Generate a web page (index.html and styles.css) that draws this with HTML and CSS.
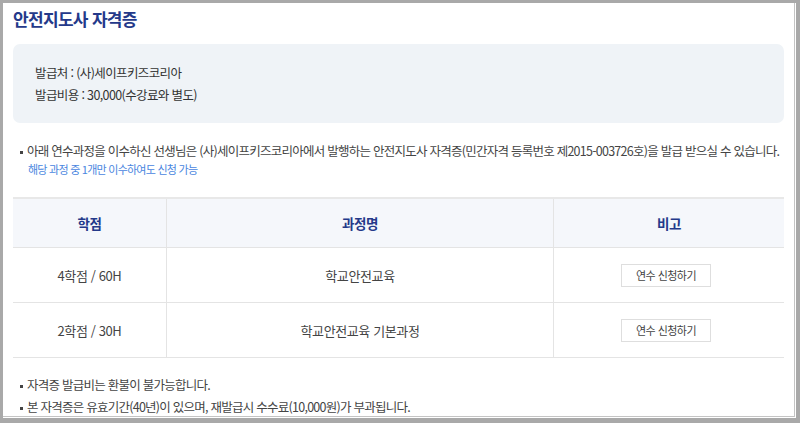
FILE: index.html
```html
<!DOCTYPE html>
<html lang="ko">
<head>
    <meta charset="UTF-8">
    <meta name="viewport" content="width=device-width, initial-scale=1.0">
    <title>안전지도사 자격증</title>
    <link rel="stylesheet" href="styles.css">
</head>
<body>
    <div class="frame">
        <div class="page">
            <h1 class="title">안전지도사 자격증</h1>

            <div class="info-box">
                <p>발급처 : (사)세이프키즈코리아</p>
                <p>발급비용 : 30,000(수강료와 별도)</p>
            </div>

            <div class="notice">
                <p class="bullet">아래 연수과정을 이수하신 선생님은 (사)세이프키즈코리아에서 발행하는 안전지도사 자격증(민간자격 등록번호 제2015-003726호)을 발급 받으실 수 있습니다.</p>
                <p class="sub">해당 과정 중 1개만 이수하여도 신청 가능</p>
            </div>

            <table class="course-table">
                <thead>
                    <tr>
                        <th class="col-credit">학점</th>
                        <th class="col-name">과정명</th>
                        <th class="col-note">비고</th>
                    </tr>
                </thead>
                <tbody>
                    <tr>
                        <td>4학점 / 60H</td>
                        <td>학교안전교육</td>
                        <td><button class="apply-btn">연수 신청하기</button></td>
                    </tr>
                    <tr>
                        <td>2학점 / 30H</td>
                        <td>학교안전교육 기본과정</td>
                        <td><button class="apply-btn">연수 신청하기</button></td>
                    </tr>
                </tbody>
            </table>

            <div class="footnotes">
                <p class="bullet">자격증 발급비는 환불이 불가능합니다.</p>
                <p class="bullet">본 자격증은 유효기간(40년)이 있으며, 재발급시 수수료(10,000원)가 부과됩니다.</p>
            </div>
        </div>
    </div>
</body>
</html>
```

FILE: styles.css
```css
html, body {
    margin: 0;
    height: 100%;
}
body {
    background-color: #a9a9a9;
    font-family: "Noto Sans CJK KR", "Noto Sans", sans-serif;
    color: #444;
    overflow: hidden;
}
p {
    margin: 0;
}
.frame {
    margin: 3px 4px 0 3px;
    height: 414px;
    background-color: #fff;
    border-right: 1px solid #fff;
    border-bottom: 1px solid #fff;
}
.page {
    height: 100%;
    box-sizing: border-box;
    padding: 3px 10px 0 10px;
    background-color: #fff;
    border-right: 1px solid #c4c4c4;
    border-bottom: 1px solid #c4c4c4;
    overflow: hidden;
}
.title {
    margin: 0;
    font-size: 17px;
    line-height: 26px;
    font-weight: 700;
    color: #24398a;
    letter-spacing: -0.04em;
}
.info-box {
    margin-top: 12px;
    padding: 18px 22px 17px;
    background-color: #eff3f7;
    border-radius: 7px;
    font-size: 12.5px;
    line-height: 22px;
    color: #333;
    letter-spacing: -0.05em;
}
.notice {
    margin-top: 19px;
    padding-left: 7px;
    font-size: 12.5px;
    line-height: 18px;
    letter-spacing: -0.06em;
}
.bullet::before {
    content: "";
    display: inline-block;
    width: 3px;
    height: 3px;
    margin-right: 4px;
    vertical-align: middle;
    background-color: #444;
}
.sub {
    padding-left: 8px;
    font-size: 11px;
    color: #4a86e0;
}
.course-table {
    width: 100%;
    margin-top: 19px;
    border-collapse: collapse;
    border-top: 2px solid #e8e8e8;
    font-size: 13px;
    letter-spacing: -0.03em;
    color: #444;
}
.course-table th {
    height: 48px;
    padding: 0;
    background-color: #f5f7fb;
    color: #24398a;
    font-weight: 700;
    font-size: 13.5px;
    border-bottom: 1px solid #e4e4e4;
}
.course-table td {
    height: 54px;
    padding: 0;
    text-align: center;
    border-bottom: 1px solid #e4e4e4;
}
.course-table th + th,
.course-table td + td {
    border-left: 1px solid #e4e4e4;
}
.col-credit {
    width: 153px;
}
.col-note {
    width: 230px;
}
.apply-btn {
    width: 90px;
    height: 23px;
    padding: 0;
    background-color: #fff;
    border: 1px solid #dedede;
    font-family: inherit;
    font-size: 11px;
    letter-spacing: -0.05em;
    color: #444;
    margin-right: 6px;
}
.footnotes {
    margin-top: 16px;
    padding-left: 7px;
    font-size: 12.5px;
    line-height: 22px;
    letter-spacing: -0.06em;
}
```
